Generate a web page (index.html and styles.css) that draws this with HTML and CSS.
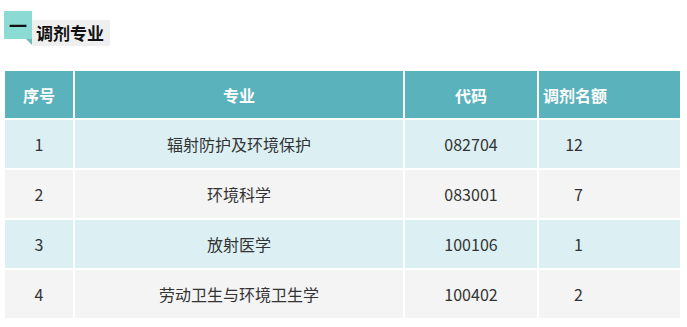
FILE: index.html
```html
<html><head>
<meta charset="utf-8">
<title>调剂专业</title>
<link rel="stylesheet" href="styles.css">
</head>
<body>
<div class="title">
  <div class="num">
    <div class="box">一</div>
    <div class="fold"></div>
  </div>
  <div class="label">调剂专业</div>
</div>
<table>
<tr class="head"><th class="c1">序号</th><th class="c2">专业</th><th class="c3">代码</th><th class="c4">调剂名额</th></tr>
<tr class="odd"><td>1</td><td>辐射防护及环境保护</td><td>082704</td><td class="n">12</td></tr>
<tr class="even"><td>2</td><td>环境科学</td><td>083001</td><td class="n">7</td></tr>
<tr class="odd"><td>3</td><td>放射医学</td><td>100106</td><td class="n">1</td></tr>
<tr class="even"><td>4</td><td>劳动卫生与环境卫生学</td><td>100402</td><td class="n">2</td></tr>
</table>
</body>
</html>
```

FILE: styles.css
```css
body { margin: 0; font-family: "Noto Sans CJK SC", "Noto Sans", sans-serif; color: #222; background: #fff; }
.title { display: flex; align-items: flex-start; padding: 11px 0 0 4px; }
.num { display: flex; flex-direction: column; align-items: flex-end; }
.box { width: 28px; height: 28px; background: #8bdad3; color: #111; font-weight: bold; font-size: 18px; line-height: 28px; text-align: center; }
.fold { width: 0; height: 0; border-top: 6px solid #6cbab3; border-left: 6px solid transparent; }
.label { margin-top: 9px; width: 78px; height: 26px; box-sizing: border-box; padding-left: 4px; background: #efefef; font-size: 17px; font-weight: bold; line-height: 26px; color: #111; }
table { margin: 25px 0 0 5px; width: 675px; table-layout: fixed; border-collapse: separate; border-spacing: 0; }
th, td { box-sizing: border-box; padding: 0; text-align: center; border-right: 2px solid #fff; border-bottom: 2px solid #fff; font-size: 16px; }
th:last-child, td:last-child { border-right: none; }
.c1 { width: 70px; }
.c2 { width: 330px; }
.c3 { width: 134px; }
.c4 { width: 141px; text-align: left; padding-left: 4px; }
tr.head th { height: 49px; background: #5ab2bc; color: #fff; font-weight: bold; }
tr.odd td { height: 50px; background: #dcf0f3; color: #333; }
tr.even td { height: 50px; background: #f4f4f4; color: #333; }
td.n { text-align: right; padding-right: 97px; }
```
